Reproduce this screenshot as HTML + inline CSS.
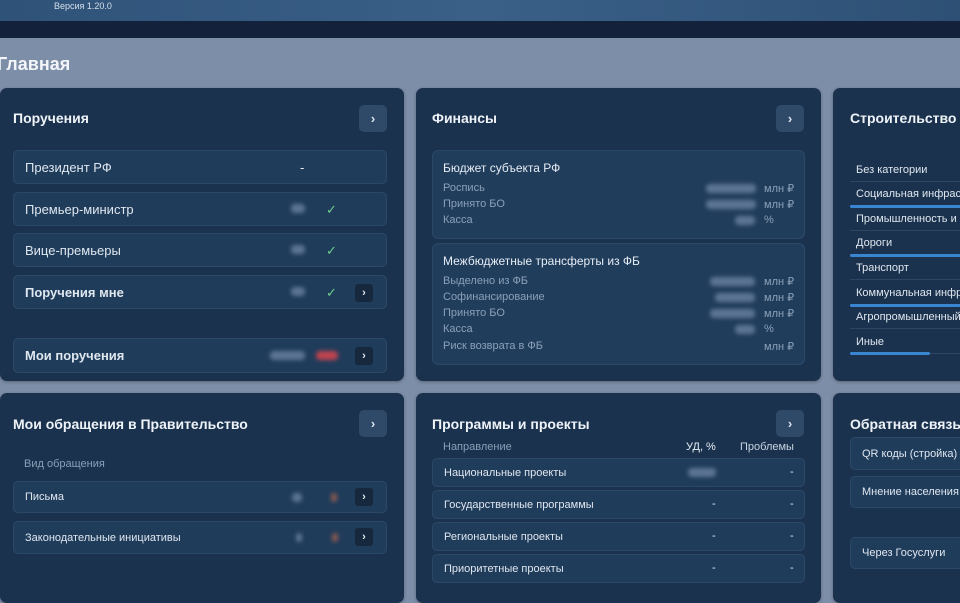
<!DOCTYPE html><html><head><meta charset="utf-8"><style>
*{box-sizing:border-box;margin:0;padding:0}
body{width:960px;height:592px;overflow:hidden;background:#7d8ea8;font-family:"Liberation Sans",sans-serif;color:#e6edf5;position:relative}
.abs{position:absolute;white-space:nowrap}
.top{left:0;top:0;width:960px;height:21px;background:linear-gradient(90deg,#2f5278,#3a6088,#2e5075)}
.band{left:0;top:21px;width:960px;height:17px;background:#13223a}
.card{position:absolute;background:#1b324e;border-radius:7px;box-shadow:0 1px 3px rgba(0,0,0,.3)}
.ttl{position:absolute;font-weight:bold;font-size:14px;color:#eef3f8;white-space:nowrap}
.btn{position:absolute;width:28px;height:27px;border-radius:5px;background:#2f4a68;color:#dde6ef;font-size:13px;font-weight:bold;text-align:center;line-height:27px}
.row{position:absolute;background:#203c5b;border:1px solid #2b4868;border-radius:5px;font-size:13px;color:#dfe7ef;padding-left:11px;display:flex;align-items:center;white-space:nowrap;overflow:hidden}
.blur{position:absolute;height:9px;border-radius:4px;background:#5d7594;filter:blur(2px)}
.ck{position:absolute;color:#6fcf8a;font-size:13px}
.sb{position:absolute;width:18px;height:18px;background:#16283e;border-radius:3px;color:#dfe7ef;font-size:11px;font-weight:bold;text-align:center;line-height:18px}
.box{position:absolute;background:#213d5c;border:1px solid #2b4868;border-radius:6px}
.s{position:absolute;font-size:11px;color:#8aa0b8;white-space:nowrap}
.u{position:absolute;font-size:11px;color:#8aa0b8;white-space:nowrap}
.li{position:absolute;left:850px;width:120px;height:24px;border-bottom:1px solid #2c4664;font-size:11px;color:#dfe7ef;padding:6px 0 0 6px;white-space:nowrap;overflow:hidden}
.bar{position:absolute;left:850px;height:3px;background:#3a85d0;border-radius:2px}
.d{position:absolute;font-size:11px;top:0}
</style></head><body>
<div class="abs top"></div>
<div class="abs" style="left:54px;top:1px;font-size:9px;color:#d5dfea">Версия 1.20.0</div>
<div class="abs band"></div>
<div class="abs" style="left:-3px;top:54px;font-size:18px;font-weight:bold;color:#f2f5f9">Главная</div>

<div class="card" style="left:0;top:88px;width:404px;height:293px"></div>
<div class="ttl" style="left:13px;top:110px">Поручения</div>
<div class="btn" style="left:359px;top:105px">›</div>
<div class="row" style="left:13px;top:150px;width:374px;height:34px">Президент РФ</div>
<div class="abs" style="left:300px;top:160px;font-size:13px">-</div>
<div class="row" style="left:13px;top:192px;width:374px;height:34px">Премьер-министр</div>
<div class="blur" style="left:291px;top:204px;width:14px"></div><div class="ck" style="left:326px;top:202px">✓</div>
<div class="row" style="left:13px;top:233px;width:374px;height:34px">Вице-премьеры</div>
<div class="blur" style="left:291px;top:245px;width:14px"></div><div class="ck" style="left:326px;top:243px">✓</div>
<div class="row" style="left:13px;top:275px;width:374px;height:34px;font-weight:bold">Поручения мне</div>
<div class="blur" style="left:291px;top:287px;width:14px"></div><div class="ck" style="left:326px;top:285px">✓</div><div class="sb" style="left:355px;top:284px">›</div>
<div class="row" style="left:13px;top:338px;width:374px;height:35px;font-weight:bold">Мои поручения</div>
<div class="blur" style="left:270px;top:351px;width:35px"></div><div class="blur" style="left:316px;top:351px;width:22px;background:#c0444f"></div><div class="sb" style="left:355px;top:347px">›</div>

<div class="card" style="left:416px;top:88px;width:405px;height:293px"></div>
<div class="ttl" style="left:432px;top:110px">Финансы</div>
<div class="btn" style="left:776px;top:105px">›</div>
<div class="box" style="left:432px;top:150px;width:373px;height:89px"></div>
<div class="abs" style="left:443px;top:161px;font-size:12px">Бюджет субъекта РФ</div>
<div class="s" style="left:443px;top:182px">Роспись</div><div class="s" style="left:443px;top:198px">Принято БО</div><div class="s" style="left:443px;top:214px">Касса</div>
<div class="blur" style="left:706px;top:184px;width:50px"></div><div class="u" style="left:764px;top:182px">млн ₽</div>
<div class="blur" style="left:706px;top:200px;width:50px"></div><div class="u" style="left:764px;top:198px">млн ₽</div>
<div class="blur" style="left:735px;top:216px;width:20px"></div><div class="u" style="left:764px;top:214px">%</div>
<div class="box" style="left:432px;top:243px;width:373px;height:122px"></div>
<div class="abs" style="left:443px;top:254px;font-size:12px">Межбюджетные трансферты из ФБ</div>
<div class="s" style="left:443px;top:275px">Выделено из ФБ</div><div class="s" style="left:443px;top:291px">Софинансирование</div><div class="s" style="left:443px;top:307px">Принято БО</div><div class="s" style="left:443px;top:323px">Касса</div><div class="s" style="left:443px;top:340px">Риск возврата в ФБ</div>
<div class="blur" style="left:710px;top:277px;width:45px"></div><div class="u" style="left:764px;top:275px">млн ₽</div>
<div class="blur" style="left:715px;top:293px;width:40px"></div><div class="u" style="left:764px;top:291px">млн ₽</div>
<div class="blur" style="left:710px;top:309px;width:45px"></div><div class="u" style="left:764px;top:307px">млн ₽</div>
<div class="blur" style="left:735px;top:325px;width:20px"></div><div class="u" style="left:764px;top:323px">%</div>
<div class="u" style="left:764px;top:340px">млн ₽</div>

<div class="card" style="left:833px;top:88px;width:140px;height:293px"></div>
<div class="ttl" style="left:850px;top:110px">Строительство</div>
<div class="li" style="top:158px">Без категории</div>
<div class="li" style="top:182px">Социальная инфраструктура</div><div class="bar" style="top:205px;width:120px"></div>
<div class="li" style="top:207px">Промышленность и</div>
<div class="li" style="top:231px">Дороги</div><div class="bar" style="top:254px;width:120px"></div>
<div class="li" style="top:256px">Транспорт</div>
<div class="li" style="top:281px">Коммунальная инфраструктура</div><div class="bar" style="top:304px;width:120px"></div>
<div class="li" style="top:305px">Агропромышленный</div>
<div class="li" style="top:330px">Иные</div><div class="bar" style="top:352px;width:80px"></div>

<div class="card" style="left:0;top:393px;width:404px;height:210px"></div>
<div class="ttl" style="left:13px;top:416px">Мои обращения в Правительство</div>
<div class="btn" style="left:359px;top:410px">›</div>
<div class="s" style="left:24px;top:458px">Вид обращения</div>
<div class="row" style="left:13px;top:481px;width:374px;height:32px;font-size:11px">Письма</div>
<div class="blur" style="left:292px;top:493px;width:10px"></div><div class="blur" style="left:331px;top:493px;width:6px;background:#8a5a50"></div><div class="sb" style="left:355px;top:488px">›</div>
<div class="row" style="left:13px;top:521px;width:374px;height:33px;font-size:11px">Законодательные инициативы</div>
<div class="blur" style="left:296px;top:533px;width:6px"></div><div class="blur" style="left:332px;top:533px;width:6px;background:#8a5a50"></div><div class="sb" style="left:355px;top:528px">›</div>

<div class="card" style="left:416px;top:393px;width:405px;height:210px"></div>
<div class="ttl" style="left:432px;top:416px">Программы и проекты</div>
<div class="btn" style="left:776px;top:410px">›</div>
<div class="s" style="left:443px;top:441px">Направление</div><div class="abs" style="left:686px;top:441px;font-size:11px">УД, %</div><div class="abs" style="left:740px;top:441px;font-size:11px;color:#c8d4e0">Проблемы</div>
<div class="row" style="left:432px;top:458px;width:373px;height:29px;font-size:11px">Национальные проекты</div><div class="blur" style="left:688px;top:468px;width:28px"></div><div class="abs" style="left:790px;top:466px;font-size:11px">-</div>
<div class="row" style="left:432px;top:490px;width:373px;height:29px;font-size:11px">Государственные программы</div><div class="abs" style="left:712px;top:498px;font-size:11px">-</div><div class="abs" style="left:790px;top:498px;font-size:11px">-</div>
<div class="row" style="left:432px;top:522px;width:373px;height:29px;font-size:11px">Региональные проекты</div><div class="abs" style="left:712px;top:530px;font-size:11px">-</div><div class="abs" style="left:790px;top:530px;font-size:11px">-</div>
<div class="row" style="left:432px;top:554px;width:373px;height:29px;font-size:11px">Приоритетные проекты</div><div class="abs" style="left:712px;top:562px;font-size:11px">-</div><div class="abs" style="left:790px;top:562px;font-size:11px">-</div>

<div class="card" style="left:833px;top:393px;width:140px;height:210px"></div>
<div class="ttl" style="left:850px;top:416px">Обратная связь</div>
<div class="row" style="left:850px;top:437px;width:130px;height:33px;font-size:11px">QR коды (стройка)</div>
<div class="row" style="left:850px;top:476px;width:130px;height:32px;font-size:11px">Мнение населения</div>
<div class="row" style="left:850px;top:537px;width:130px;height:32px;font-size:11px">Через Госуслуги</div>
</body></html>
